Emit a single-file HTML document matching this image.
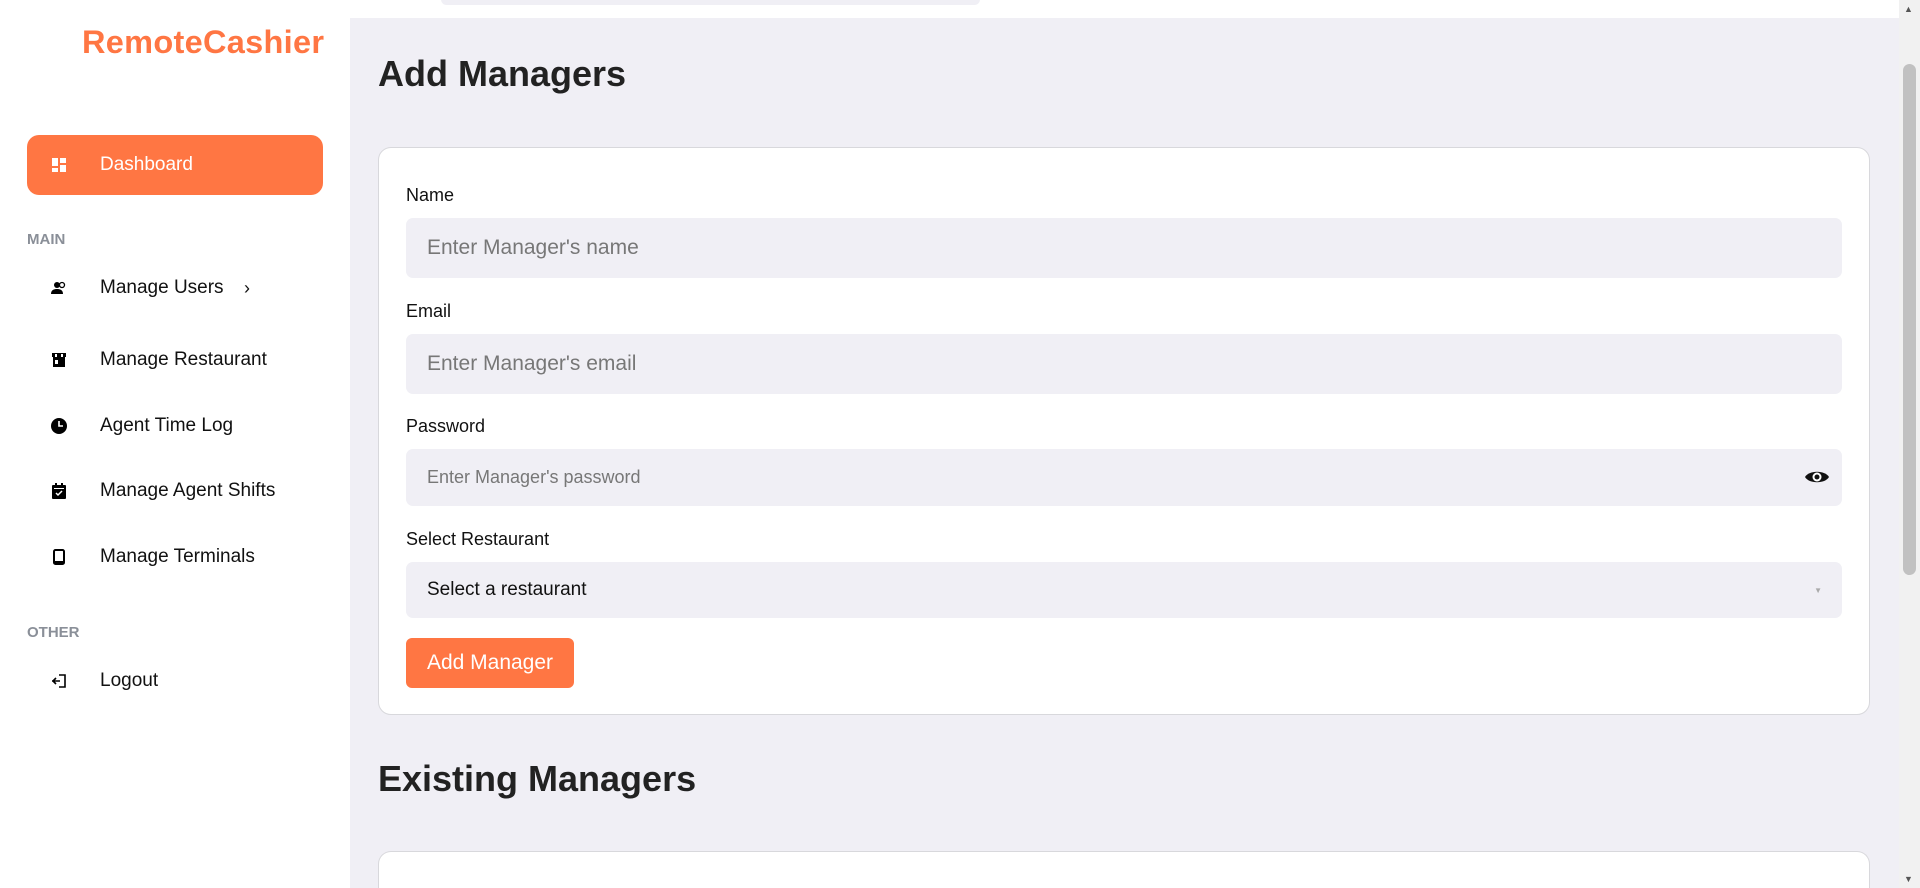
<!DOCTYPE html>
<html style="overflow:hidden"><head><meta charset="utf-8"><style>
*{box-sizing:border-box;margin:0;padding:0}
html,body{width:1920px;height:888px;overflow:hidden}
body{background:#fff;font-family:"Liberation Sans",sans-serif;position:relative;color:#111}
.side{position:absolute;left:0;top:0;width:350px;height:888px;background:#fff}
.logo{position:absolute;left:82px;top:24px;font-size:32.5px;font-weight:bold;color:#ff7643;letter-spacing:0.3px}
.dash{position:absolute;left:27px;top:135px;width:296px;height:60px;background:#ff7643;border-radius:12px;color:#fff}
.item{position:absolute;left:0;width:350px;height:30px;font-size:19px;display:flex;align-items:center}
.item .ic{position:absolute;left:51px;width:16px;height:16px;display:flex;align-items:center;justify-content:center}
.item .tx{position:absolute;left:100px}
.sec{position:absolute;left:27px;font-size:15px;font-weight:bold;color:#8a8f98}
.main{position:absolute;left:350px;top:18px;width:1549px;height:870px;background:#f0eff5}
.topbar{position:absolute;left:441px;top:-6px;width:539px;height:11px;background:#f0eff5;border-radius:6px}
h1{position:absolute;left:378px;font-size:36px;font-weight:bold;color:#222}
.card{position:absolute;left:378px;width:1492px;background:#fff;border:1px solid #d8d8dc;border-radius:13px}
.lbl{position:absolute;left:406px;font-size:18px;color:#111}
.inp{position:absolute;left:406px;width:1436px;background:#f0eff5;border-radius:7px;color:#777;display:flex;align-items:center;padding-left:21px}
.btn{position:absolute;left:406px;top:638px;width:168px;height:50px;background:#ff7643;border-radius:6px;color:#fff;font-size:21px;display:flex;align-items:center;justify-content:center}
.sb{position:absolute;left:1899px;top:0;width:21px;height:888px;background:#f1f1f1}
.thumb{position:absolute;left:1903px;top:64px;width:13px;height:511px;background:#c1c1c1;border-radius:7px}
</style></head><body>
<div class="side">
<div class="logo">RemoteCashier</div>
<div class="dash"></div>
<div class="item" style="top:150px;color:#fff"><span class="ic"><svg width="14" height="14" viewBox="0 0 14 14" fill="#fff"><rect x="0" y="0" width="6" height="8"/><rect x="8" y="0" width="6" height="5"/><rect x="0" y="10" width="6" height="4"/><rect x="8" y="7" width="6" height="7"/></svg></span><span class="tx">Dashboard</span></div>
<div class="sec" style="top:231px">MAIN</div>
<div class="item" style="top:273px"><span class="ic"><svg width="16" height="14" viewBox="0 0 16 14"><circle cx="6" cy="4" r="3"/><path d="M0 13c0-4 3-5 6-5s6 1 6 5z"/><circle cx="11" cy="4" r="2.5" fill="none" stroke="#000" stroke-width="1.3"/></svg></span><span class="tx">Manage Users</span><span style="position:absolute;left:244px;font-size:18px">›</span></div>
<div class="item" style="top:345px"><span class="ic"><svg width="16" height="16" viewBox="0 0 16 16"><path d="M1 1h14v4h-1v10H2V5H1z"/><rect x="4" y="2" width="2" height="3" fill="#fff"/><rect x="10" y="2" width="2" height="3" fill="#fff"/><rect x="4" y="8" width="3" height="4" fill="#fff"/></svg></span><span class="tx">Manage Restaurant</span></div>
<div class="item" style="top:411px"><span class="ic"><svg width="16" height="16" viewBox="0 0 16 16"><circle cx="8" cy="8" r="8"/><path d="M8 3v5h4" stroke="#fff" stroke-width="1.6" fill="none"/></svg></span><span class="tx">Agent Time Log</span></div>
<div class="item" style="top:476px"><span class="ic"><svg width="14" height="16" viewBox="0 0 14 16"><rect x="0" y="2" width="14" height="14" rx="1"/><rect x="3" y="0" width="2" height="3"/><rect x="9" y="0" width="2" height="3"/><rect x="2" y="5" width="10" height="1" fill="#fff"/><path d="M4 10l2 2 4-4" stroke="#fff" stroke-width="1.5" fill="none"/></svg></span><span class="tx">Manage Agent Shifts</span></div>
<div class="item" style="top:542px"><span class="ic"><svg width="12" height="16" viewBox="0 0 12 16"><rect x="1" y="1" width="10" height="14" rx="1.5" fill="none" stroke="#000" stroke-width="2"/><rect x="1" y="12" width="10" height="3"/></svg></span><span class="tx">Manage Terminals</span></div>
<div class="sec" style="top:624px">OTHER</div>
<div class="item" style="top:666px"><span class="ic"><svg width="16" height="16" viewBox="0 0 16 16" fill="none" stroke="#000" stroke-width="1.6"><path d="M8 2h6v12H8"/><path d="M1 8h8M5 5l-3 3 3 3"/></svg></span><span class="tx">Logout</span></div>
</div>
<div class="main"></div>
<div class="topbar"></div>
<h1 style="top:53px">Add Managers</h1>
<div class="card" style="top:147px;height:568px"></div>
<div class="lbl" style="top:185px">Name</div>
<div class="inp" style="top:218px;height:60px;font-size:21px">Enter Manager's name</div>
<div class="lbl" style="top:301px">Email</div>
<div class="inp" style="top:334px;height:60px;font-size:21px">Enter Manager's email</div>
<div class="lbl" style="top:416px">Password</div>
<div class="inp" style="top:449px;height:57px;font-size:18px">Enter Manager's password
<svg style="position:absolute;right:12px;top:19px" width="26" height="18" viewBox="0 0 26 18"><path d="M1 9C5 2 21 2 25 9C21 16 5 16 1 9z" fill="#111"/><circle cx="13" cy="9" r="4.5" fill="#fff"/><circle cx="13" cy="9" r="2.5" fill="#111"/></svg></div>
<div class="lbl" style="top:529px">Select Restaurant</div>
<div class="inp" style="top:562px;height:56px;font-size:19px;color:#111">Select a restaurant<span style="position:absolute;right:20px;font-size:8px;color:#aaa">▼</span></div>
<div class="btn">Add Manager</div>
<h1 style="top:758px">Existing Managers</h1>
<div class="card" style="top:851px;height:37px;border-bottom:none;border-radius:13px 13px 0 0"></div>
<div class="sb"></div><div class="thumb"></div>
<div style="position:absolute;left:1904px;top:4px;font-size:9px;color:#555">▲</div>
<div style="position:absolute;left:1904px;top:874px;font-size:9px;color:#555">▼</div>
</body></html>
